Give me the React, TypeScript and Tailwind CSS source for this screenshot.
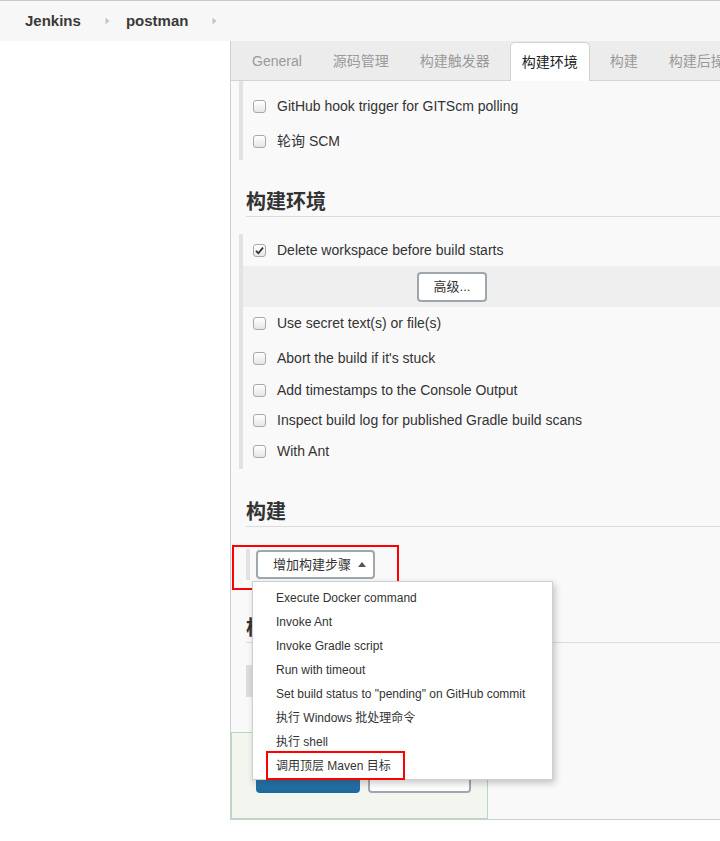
const font = { fontFamily: '"Liberation Sans", "Noto Sans CJK SC", sans-serif' };

const Arrow = () => (
  <svg width="5" height="8" viewBox="0 0 5 8" className="shrink-0">
    <path d="M0.5 0.5 L4.5 4 L0.5 7.5 Z" fill="#c4c4c4" />
  </svg>
);

const Checkbox = ({ checked = false }: { checked?: boolean }) => (
  <span className="w-[13px] h-[13px] shrink-0 rounded-[3px] border border-[#a9a9a9] bg-gradient-to-b from-white to-[#e6e6e6] flex items-center justify-center">
    {checked && (
      <svg width="9" height="9" viewBox="0 0 9 9">
        <path d="M1 4.8 L3.4 7.2 L8 1.6" stroke="#333" strokeWidth="1.8" fill="none" />
      </svg>
    )}
  </span>
);

const Row = ({ label, h, checked }: { label: string; h: number; checked?: boolean }) => (
  <div className="flex items-center pl-[10px]" style={{ height: h }}>
    <Checkbox checked={checked} />
    <span className="ml-[11px] text-[14px] text-[#333]">{label}</span>
  </div>
);

const Heading = ({ text, mt }: { text: string; mt: number }) => (
  <div
    className="ml-[15px] h-[29px] border-b border-[#dcdcdc] text-[20px] font-bold leading-[28px] text-[#333] whitespace-nowrap"
    style={{ marginTop: mt }}
  >
    {text}
  </div>
);

const tabs = ["General", "源码管理", "构建触发器", "构建环境", "构建", "构建后操作"];

const menu = [
  "Execute Docker command",
  "Invoke Ant",
  "Invoke Gradle script",
  "Run with timeout",
  'Set build status to "pending" on GitHub commit',
  "执行 Windows 批处理命令",
  "执行 shell",
  "调用顶层 Maven 目标",
];

export default function App() {
  return (
    <div className="relative w-[720px] h-[841px] bg-white overflow-hidden" style={font}>
      {/* breadcrumb */}
      <div className="h-[41px] border-t border-[#c8c8c8] bg-[#f7f7f7] flex items-center pl-[25px] text-[15px] font-bold text-[#3a3a3a]">
        <span>Jenkins</span>
        <span className="ml-[24px] mr-[16px]"><Arrow /></span>
        <span>postman</span>
        <span className="ml-[24px]"><Arrow /></span>
      </div>

      <div className="flex">
        <div className="w-[230px] shrink-0" />
        <div className="flex-1 h-[779px] border-l border-b border-[#cfcfcf] bg-[#f9f9f9] flex flex-col overflow-hidden">
          {/* tabs */}
          <div className="h-[40px] shrink-0 border-b border-[#d4d4d4] bg-[#ececec] flex items-end pl-[10px] gap-[9px] whitespace-nowrap">
            {tabs.map((t) =>
              t === "构建环境" ? (
                <div
                  key={t}
                  className="h-[39px] -mb-px px-[11px] flex items-center bg-white border border-b-0 border-[#d0d0d0] rounded-t-[5px] text-[14px] text-[#222]"
                >
                  {t}
                </div>
              ) : (
                <div key={t} className="h-[38px] px-[11px] flex items-center text-[14px] text-[#9a9a9a]">
                  {t}
                </div>
              )
            )}
          </div>

          {/* trigger tail */}
          <div className="ml-[8px] border-l-4 border-[#e2e2e2] pt-[8px] pb-[1px]">
            <Row label="GitHub hook trigger for GITScm polling" h={35} />
            <Row label="轮询 SCM" h={35} />
          </div>

          <Heading text="构建环境" mt={28} />

          <div className="mt-[17px] ml-[8px] border-l-4 border-[#e2e2e2] pb-[2px]">
            <Row label="Delete workspace before build starts" h={32} checked />
            <div className="h-[41px] bg-[#efefef] flex items-center">
              <button className="ml-[174px] w-[70px] h-[30px] rounded-[4px] border-2 border-[#9fa7ae] bg-white text-[13px] text-[#333]">
                高级...
              </button>
            </div>
            <Row label="Use secret text(s) or file(s)" h={33} />
            <Row label="Abort the build if it's stuck" h={36} />
            <Row label="Add timestamps to the Console Output" h={28} />
            <Row label="Inspect build log for published Gradle build scans" h={32} />
            <Row label="With Ant" h={31} />
          </div>

          <Heading text="构建" mt={29} />

          <div className="mt-[22px] ml-[15px] h-[31px] border-l-4 border-[#e2e2e2] flex items-center">
            <button className="ml-[6px] w-[119px] h-[29px] rounded-[4px] border-2 border-[#9fa7ae] bg-white flex items-center pl-[15px] text-[13px] text-[#333]">
              增加构建步骤
              <svg width="8" height="5" viewBox="0 0 8 5" className="ml-[7px]">
                <path d="M0 5 L4 0 L8 5 Z" fill="#555" />
              </svg>
            </button>
          </div>

          <Heading text="构建后操作" mt={34} />

          <div className="mt-[22px] ml-[15px] h-[32px] border-l-[6px] border-[#dddddd] flex items-center">
            <button className="ml-[6px] h-[29px] px-[14px] rounded-[4px] border-2 border-[#9fa7ae] bg-white text-[13px] text-[#333]">
              增加构建后操作步骤
            </button>
          </div>

          {/* bottom sticker */}
          <div className="mt-auto w-[257px] h-[87px] border border-[#b6d8c1] bg-[#f3f6ef] pl-[24px] pt-[18px] flex gap-[8px]">
            <button className="w-[104px] h-[42px] rounded-[4px] bg-gradient-to-b from-[#4a8fc4] to-[#1c6a9f] text-white text-[13px] pb-[10px]">
              保存
            </button>
            <button className="w-[103px] h-[42px] rounded-[4px] border-2 border-[#9fa7ae] bg-white text-[13px] text-[#333] pb-[10px]">
              应用
            </button>
          </div>
        </div>
      </div>

      {/* annotation around the add-step button */}
      <div className="absolute left-[232px] top-[545px] w-[167px] h-[45px] border-2 border-[#ff0000]" />

      {/* dropdown */}
      <div className="absolute left-[252px] top-[581px] w-[301px] h-[199px] bg-white border border-[#cfcfcf] shadow-[2px_3px_7px_rgba(0,0,0,0.22)] pt-[4px]">
        {menu.map((m) => (
          <div key={m} className="h-[24px] flex items-center pl-[23px] text-[12px] text-[#333] whitespace-nowrap">
            {m}
          </div>
        ))}
      </div>
      <div className="absolute left-[266px] top-[751px] w-[139px] h-[29px] border-2 border-[#ff0000]" />
    </div>
  );
}
